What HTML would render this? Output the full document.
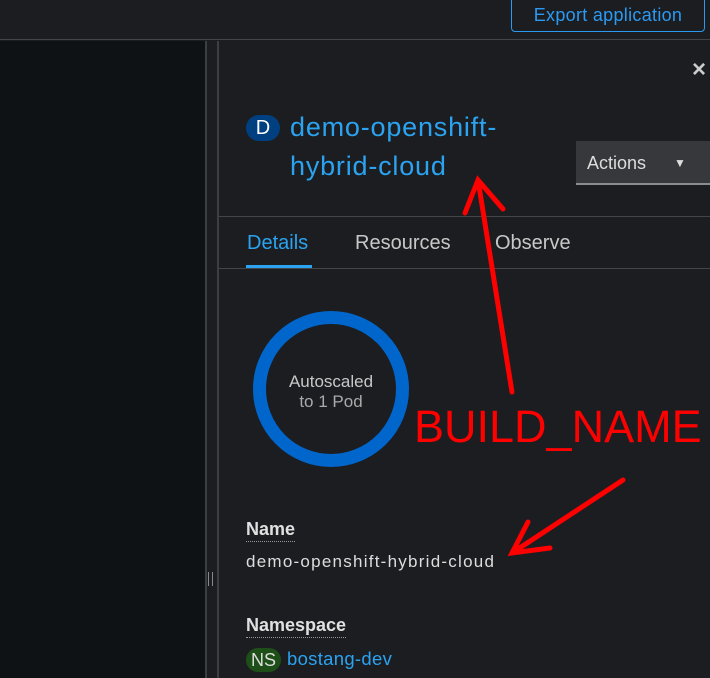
<!DOCTYPE html>
<html><head><style>
*{margin:0;padding:0;box-sizing:border-box}
body{width:710px;height:678px;overflow:hidden;background:#1b1d21;font-family:"Liberation Sans",sans-serif;position:relative}
.a{position:absolute;white-space:nowrap}
</style></head><body>
<div class="a" style="left:0;top:0;width:710px;height:40px;background:#1b1d21;border-bottom:1px solid #444548"></div>
<div class="a" style="left:511px;top:-6px;width:194px;height:38px;border:1px solid #2b9af3;border-radius:4px;color:#2b9af3;font-size:18px;line-height:32px;text-align:center;padding-top:4px;letter-spacing:0.3px">Export application</div>
<div class="a" style="left:0;top:41px;width:205px;height:637px;background:#0f1214"></div>
<div class="a" style="left:205px;top:41px;width:2px;height:637px;background:#3c3f42"></div>
<div class="a" style="left:217px;top:41px;width:2px;height:637px;background:#3c3f42"></div>
<div class="a" style="left:208px;top:572px;width:1px;height:14px;background:#888"></div>
<div class="a" style="left:212px;top:572px;width:1px;height:14px;background:#888"></div>
<div class="a" style="left:692px;top:56px;color:#ccc;font-size:24px;font-weight:bold">×</div>
<div class="a" style="left:246px;top:115px;width:34px;height:26px;border-radius:13px;background:#004080;color:#fff;font-size:20px;text-align:center;line-height:26px">D</div>
<div class="a" style="left:290px;top:108px;color:#2ba3f0;font-size:27px;line-height:39px;letter-spacing:0.8px">demo-openshift-<br>hybrid-cloud</div>
<div class="a" style="left:576px;top:141px;width:134px;height:44px;background:#36383c;border-bottom:2px solid #8a8d90;color:#ddd;font-size:18px;line-height:44px;padding-left:11px">Actions<span style="position:absolute;left:98px;top:0;font-size:12px">▼</span></div>
<div class="a" style="left:219px;top:216px;width:491px;height:1px;background:#444548"></div>
<div class="a" style="left:219px;top:268px;width:491px;height:1px;background:#444548"></div>
<div class="a" style="left:247px;top:232px;color:#2ba3f0;font-size:20px">Details</div>
<div class="a" style="left:246px;top:265px;width:66px;height:3px;background:#2ba3f0"></div>
<div class="a" style="left:355px;top:232px;color:#c8c8c8;font-size:20px">Resources</div>
<div class="a" style="left:495px;top:232px;color:#c8c8c8;font-size:20px">Observe</div>
<svg class="a" style="left:0;top:0" width="710" height="678">
<circle cx="331" cy="389" r="71.5" fill="none" stroke="#0066cc" stroke-width="13"/>
<g stroke="#f00" stroke-width="5" stroke-linecap="round" fill="none">
<path d="M512 392 L478 180 M465 213 L478 180 L503 209"/>
<path d="M623 480 L512 553 M528 522 L512 553 L550 548"/>
</g>
</svg>
<div class="a" style="left:250px;top:372px;width:162px;text-align:center;color:#c8c8c8;font-size:17px;line-height:20px">Autoscaled<br><span style="color:#aaa">to 1 Pod</span></div>
<div class="a" style="left:414px;top:402px;color:#f00;font-size:45px;line-height:50px">BUILD_NAME</div>
<div class="a" style="left:246px;top:519px;color:#e0e0e0;font-size:18px;font-weight:bold;border-bottom:1px dotted #999;padding-bottom:1px">Name</div>
<div class="a" style="left:246px;top:552px;color:#ddd;font-size:17px;letter-spacing:1.25px">demo-openshift-hybrid-cloud</div>
<div class="a" style="left:246px;top:615px;color:#e0e0e0;font-size:18px;font-weight:bold;border-bottom:1px dotted #999;padding-bottom:1px">Namespace</div>
<div class="a" style="left:246px;top:648px;width:35px;height:24px;border-radius:12px;background:#1e4f18;color:#ddd;font-size:18px;text-align:center;line-height:24px">NS</div>
<div class="a" style="left:287px;top:648px;color:#2ba3f0;font-size:18.5px;letter-spacing:0.3px">bostang-dev</div>
</body></html>
